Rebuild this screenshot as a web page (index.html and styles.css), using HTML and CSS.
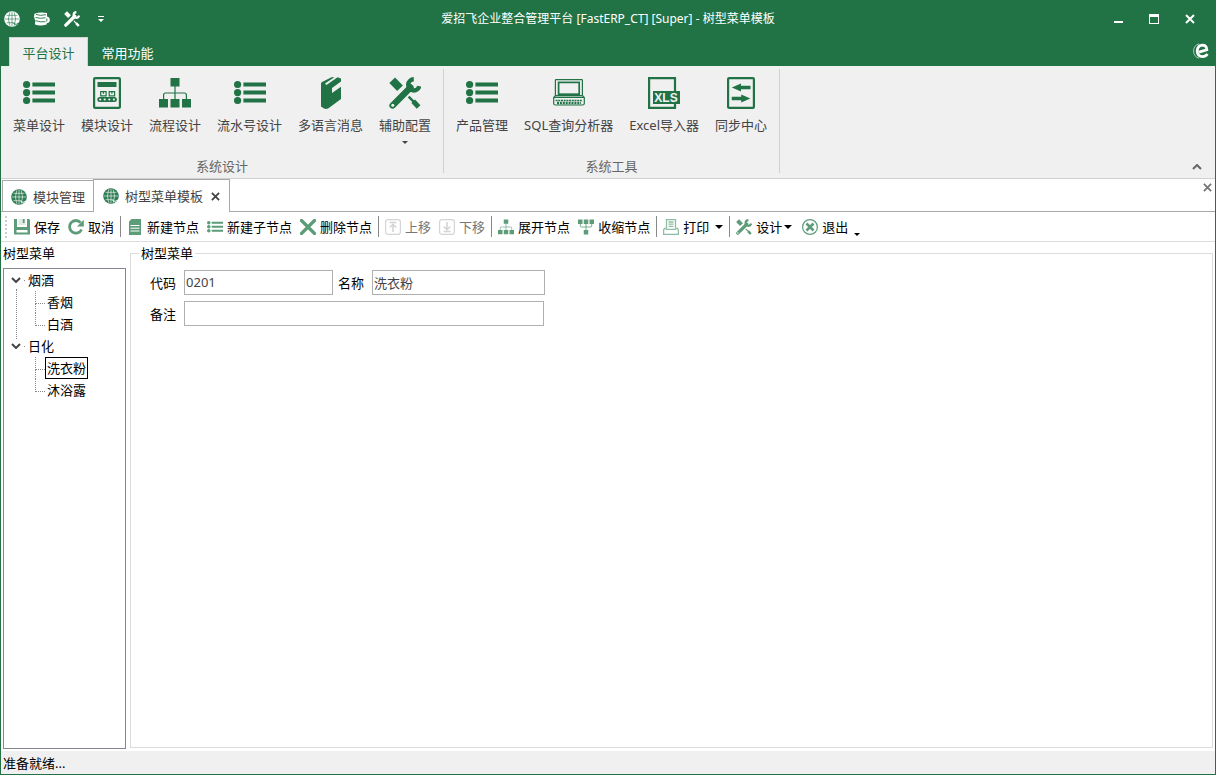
FILE: index.html
```html
<!DOCTYPE html>
<html lang="zh-CN">
<head>
<meta charset="utf-8">
<meta name="viewport" content="width=device-width, initial-scale=1">
<title>爱招飞企业整合管理平台</title>
<link rel="stylesheet" href="styles.css">
</head>
<body>
<svg class="sprite" aria-hidden="true">
  <symbol id="i-list" viewBox="0 0 32 32">
    <g fill="currentColor"><circle cx="3.6" cy="7.5" r="3.6"/><circle cx="3.6" cy="15.6" r="3.6"/><circle cx="3.6" cy="23.5" r="3.6"/>
    <path d="M9.4 5.5H32v4H9.4zM9.4 13.6H32v4H9.4zM9.4 21.5H32v4H9.4z"/></g>
  </symbol>
  <symbol id="i-module" viewBox="0 0 32 32">
    <rect x="3.1" y="1.1" width="25.8" height="29.8" rx="1" fill="none" stroke="currentColor" stroke-width="2.2"/>
    <path d="M6.5 5h19v5h-19z" fill="currentColor"/>
    <path d="M9.7 14.700h5.400v4.200H9.700zM18.200 14.700h5.400v4.200h-5.400zM12.400 14.700v2M20.900 14.700v2" fill="none" stroke="currentColor" stroke-width="1.200"/>
    <rect x="6.3" y="20" width="19.600" height="5" rx="2.500" fill="currentColor"/>
    <g fill="#f0f0f0"><circle cx="9.200" cy="22.500" r="1.100"/><circle cx="13.700" cy="22.500" r="1.100"/><circle cx="18.300" cy="22.500" r="1.100"/><circle cx="22.900" cy="22.500" r="1.100"/></g>
  </symbol>
  <symbol id="i-flow" viewBox="0 0 32 32">
    <path d="M11.5 1h9v8.6h-9zM0 22h9v8.6H0zM11.5 22h9v8.6h-9zM23 22h9v8.6h-9z" fill="currentColor"/>
    <path d="M16 9v14M4.600 22.500V18q0-2 2-2h18.800q2 0 2 2v4.500" fill="none" stroke="currentColor" stroke-width="1.200"/>
  </symbol>
  <symbol id="i-collapse" viewBox="0 0 32 32">
    <path d="M11.500 22h9v9h-9zM0 1h9v9H0zM11.500 1h9v9h-9zM23 1h9v9h-9z" fill="currentColor"/>
    <path d="M16 9v14M4.600 9v5q0 2 2 2h18.800q2 0 2-2V9" fill="none" stroke="currentColor" stroke-width="1.600"/>
  </symbol>
  <symbol id="i-book" viewBox="0 0 32 32">
    <path d="M6 6.500Q6 5.500 7 5L16 .5 18 0 19 .6 10 6.500 11.500 8 22.500.3 26 1.500V4.500L17 11V16L26 9.800V22L13.500 31.300Q11 32.500 9 31.500L6 29.500z" fill="currentColor"/>
  </symbol>
  <symbol id="i-tools" viewBox="0 0 32 32">
    <g fill="none" stroke="currentColor">
      <path d="M3.200 3.200 11 11.200" stroke-width="8"/>
      <path d="M3.600 28.400 21.500 10.500" stroke-width="6.400" stroke-linecap="round"/>
      <path d="M24.800 2.300a5.600 5.600 0 1 0 5.500 6.900" stroke-width="4.400"/>
      <path d="m19.600 19.600 6 6" stroke-width="2.400"/>
      <path d="m24.200 24.200 5.400 5.800" stroke-width="5"/>
    </g>
    <circle cx="3.800" cy="28.200" r="1.500" fill="#f4f4f4"/>
  </symbol>
  <symbol id="i-laptop" viewBox="0 0 32 32">
    <g fill="none" stroke="currentColor" stroke-width="1.200">
      <rect x="2.400" y="2.600" width="27" height="16" rx=".6"/>
      <rect x="5.600" y="5.400" width="20.600" height="11.800" stroke-width="1.700"/>
      <path d="M2.400 18.600.7 20.400V26.500q0 1.500 1.800 1.500h27q1.800 0 1.800-1.500v-6.100l-1.700-1.800M1 20.300h30"/>
      <path d="M2.600 23.500h27" stroke-width="1.600" stroke-dasharray="2 .7"/>
      <path d="M4 26h24" stroke-width="2.400" stroke-dasharray="2 .9"/>
    </g>
  </symbol>
  <symbol id="i-sync" viewBox="0 0 32 32">
    <rect x="3.100" y="1.100" width="25.800" height="29.800" rx="1" fill="none" stroke="currentColor" stroke-width="2.200"/>
    <path d="m6.800 10.500 9.200-4v2.300h9.500v3.500H16v2.300zM25.400 21.500l-9.200-4v2.300H6.700v3.500h9.500v2.300z" fill="currentColor"/>
  </symbol>
  <symbol id="i-globe" viewBox="0 0 16 16">
    <circle cx="8" cy="8" r="7.800" fill="currentColor"/>
    <path d="M8 1v14M1 8h14M2.500 4.300h11M2.500 11.700h8M5.800 1.300Q3 8 5.800 14.700M10.200 1.300Q13 8 10.200 14.700" fill="none" stroke="var(--grid)" stroke-width=".6"/>
    <path d="M9.500 12.500q2.500 2 5.600-.5" fill="none" stroke="var(--grid)" stroke-width="1"/>
  </symbol>
  <symbol id="i-coins" viewBox="0 0 16 16">
    <path d="M.5 2.800Q6 .6 13 2v3.500Q15 6 15.700 7.500v3q-1.200 1.700-3 1.700v1.300Q6 15.500 1 13.500V11l.8-.8L.8 8.500 0 5.500z" fill="currentColor"/>
    <path d="M2 3.500q4.500 1.600 10 .2M1.500 6.500q5 1.600 10 .2M2 9.700q5 1.800 9.500 1M12.800 7.500v3" fill="none" stroke="#217346" stroke-width=".9"/>
  </symbol>
  <symbol id="i-save" viewBox="0 0 16 16">
    <path d="M0 0h3v8h10V0h2l1 1v14.500H0z" fill="currentColor"/><path d="M4.500 0h7v6h-7z" fill="currentColor" opacity=".2"/><path d="M8.800 0h1.800v4H8.800z" fill="currentColor"/><path d="M2.500 11h11v2.500h-11z" fill="#fff"/>
  </symbol>
  <symbol id="i-redo" viewBox="0 0 16 16">
    <path d="M13.600 10.500A6.300 6.300 0 1 1 12.600 3.600" fill="none" stroke="currentColor" stroke-width="2.800"/><path d="M15.800.8v6.700H9z" fill="currentColor"/>
  </symbol>
  <symbol id="i-doc" viewBox="0 0 16 16">
    <path d="M4.500 0H14v16H2V2.500z" fill="currentColor"/><path d="M3.500 6.500h9M3.500 9.200h9M3.500 12h9" stroke="#fff" stroke-width="1"/>
  </symbol>
  <symbol id="i-del" viewBox="0 0 16 16"><path d="m1.500 1.500 13 13M14.500 1.500l-13 13" stroke="currentColor" stroke-width="3.200" stroke-linecap="round"/></symbol>
  <symbol id="i-up" viewBox="0 0 16 16"><rect x=".6" y=".6" width="14.800" height="14.800" rx="2.500" fill="none" stroke="currentColor" stroke-width="1.200"/><path d="M4.500 3.500h7M8 13V6M4.700 8.500 8 5.300l3.300 3.200" fill="none" stroke="currentColor" stroke-width="1.600"/></symbol>
  <symbol id="i-down" viewBox="0 0 16 16"><rect x=".6" y=".6" width="14.800" height="14.800" rx="2.500" fill="none" stroke="currentColor" stroke-width="1.200"/><path d="M4.500 12.500h7M8 3v7M4.700 7.500 8 10.700l3.300-3.200" fill="none" stroke="currentColor" stroke-width="1.600"/></symbol>
  <symbol id="i-print" viewBox="0 0 16 16"><path d="M3.500 9.500V.6h9v8.900M3 9.500H1.500L.6 11v4.400h14.800V11l-.9-1.500H13M5.500 3h5M5.500 5.200h5M5.500 7.400h5M3 10.300h10" fill="none" stroke="currentColor" stroke-width="1.300"/></symbol>
  <symbol id="i-exit" viewBox="0 0 16 16"><circle cx="8" cy="8" r="7.400" fill="none" stroke="currentColor" stroke-width="1.200"/><path d="m4.500 4.500 7 7M11.500 4.500l-7 7" stroke="currentColor" stroke-width="2.600"/></symbol>
  <symbol id="i-x" viewBox="0 0 10 10"><path d="m1 1 8 8M9 1 1 9" stroke="currentColor" stroke-width="2"/></symbol>
  <symbol id="i-caret" viewBox="0 0 8 4"><path d="M0 0h8L4 4z" fill="currentColor"/></symbol>
  <symbol id="i-chev" viewBox="0 0 10 6"><path d="m1 1 4 4 4-4" fill="none" stroke="currentColor" stroke-width="2"/></symbol>
</svg>

<div class="app">
  <header class="titlebar">
    <div class="quick">
      <button class="quick-btn" aria-label="系统"><svg class="ico16"><use href="#i-globe"/></svg></button>
      <button class="quick-btn" aria-label="数据"><svg class="ico16"><use href="#i-coins"/></svg></button>
      <button class="quick-btn" aria-label="设置"><svg class="ico16"><use href="#i-tools"/></svg></button>
      <button class="quick-btn" aria-label="自定义"><svg class="quick-more" viewBox="0 0 6 6"><path d="M0 0h6v1H0zM0 3h6L3 6z" fill="#fff"/></svg></button>
    </div>
    <h1 class="title">爱招飞企业整合管理平台 [FastERP_CT] [Super] - 树型菜单模板</h1>
    <div class="window-btns">
      <button class="win-btn" aria-label="最小化"><svg class="win-ico" viewBox="0 0 10 10"><path d="M1 7h9v2H1z" fill="#fff"/></svg></button>
      <button class="win-btn" aria-label="最大化"><svg class="win-ico" viewBox="0 0 10 10"><path d="M0 0h10v10H0zM1 3v6h8V3z" fill="#fff" fill-rule="evenodd"/></svg></button>
      <button class="win-btn" aria-label="关闭"><svg class="win-ico"><use href="#i-x"/></svg></button>
    </div>
  </header>

  <nav class="ribbon-tabs">
    <button class="ribbon-tab is-active">平台设计</button>
    <button class="ribbon-tab">常用功能</button>
    <svg class="brand" viewBox="0 0 16 16" aria-hidden="true"><path d="M6 9.200 13.800 6.800Q13.500 2.200 9.500 2.200 4.500 2.500 4.200 8q.3 5.600 5.300 5.700 3 0 5-2.700" fill="none" stroke="#fff" stroke-width="2.800"/><path d="M6 .8Q.6 2.500.6 8T6 15.200" fill="none" stroke="#a9cdb8" stroke-width="1"/></svg>
  </nav>

  <section class="ribbon">
    <div class="group">
      <div class="group-items">
        <button class="tool"><svg class="ico32"><use href="#i-list"/></svg><span>菜单设计</span></button>
        <button class="tool"><svg class="ico32"><use href="#i-module"/></svg><span>模块设计</span></button>
        <button class="tool"><svg class="ico32"><use href="#i-flow"/></svg><span>流程设计</span></button>
        <button class="tool"><svg class="ico32"><use href="#i-list"/></svg><span>流水号设计</span></button>
        <button class="tool"><svg class="ico32"><use href="#i-book"/></svg><span>多语言消息</span></button>
        <button class="tool"><svg class="ico32"><use href="#i-tools"/></svg><span>辅助配置</span><svg class="tool-caret"><use href="#i-caret"/></svg></button>
      </div>
      <div class="group-name">系统设计</div>
    </div>
    <div class="group">
      <div class="group-items">
        <button class="tool"><svg class="ico32"><use href="#i-list"/></svg><span>产品管理</span></button>
        <button class="tool"><svg class="ico32"><use href="#i-laptop"/></svg><span>SQL查询分析器</span></button>
        <button class="tool"><svg class="ico32" viewBox="0 0 32 32">
          <path d="M27 14V1.100H1.100v29.800H27V27" fill="none" stroke="currentColor" stroke-width="2.200"/>
          <path d="M5 14h27v13H5z" fill="currentColor"/>
          <text x="18" y="25" text-anchor="middle" fill="#f0f0f0" class="xls">XLS</text>
        </svg><span>Excel导入器</span></button>
        <button class="tool"><svg class="ico32"><use href="#i-sync"/></svg><span>同步中心</span></button>
      </div>
      <div class="group-name">系统工具</div>
    </div>
    <button class="ribbon-fold" aria-label="折叠功能区"><svg class="chev up"><use href="#i-chev"/></svg></button>
  </section>

  <nav class="doc-tabs">
    <button class="doc-tab"><svg class="ico16"><use href="#i-globe"/></svg><span>模块管理</span></button>
    <button class="doc-tab is-active"><svg class="ico16"><use href="#i-globe"/></svg><span>树型菜单模板</span><svg class="tab-x"><use href="#i-x"/></svg></button>
    <button class="doc-close" aria-label="关闭页面"><svg class="tab-x"><use href="#i-x"/></svg></button>
  </nav>

  <div class="toolbar" role="toolbar">
    <span class="grip"></span>
    <button class="cmd"><svg class="ico16"><use href="#i-save"/></svg>保存</button>
    <button class="cmd"><svg class="ico16"><use href="#i-redo"/></svg>取消</button>
    <span class="sep"></span>
    <button class="cmd"><svg class="ico16"><use href="#i-doc"/></svg>新建节点</button>
    <button class="cmd"><svg class="ico16"><use href="#i-list"/></svg>新建子节点</button>
    <button class="cmd"><svg class="ico16"><use href="#i-del"/></svg>删除节点</button>
    <span class="sep"></span>
    <button class="cmd" disabled><svg class="ico16"><use href="#i-up"/></svg>上移</button>
    <button class="cmd" disabled><svg class="ico16"><use href="#i-down"/></svg>下移</button>
    <span class="sep"></span>
    <button class="cmd"><svg class="ico16"><use href="#i-flow"/></svg>展开节点</button>
    <button class="cmd"><svg class="ico16"><use href="#i-collapse"/></svg>收缩节点</button>
    <span class="sep"></span>
    <button class="cmd cmd-split"><svg class="ico16 pale"><use href="#i-print"/></svg>打印<svg class="caret"><use href="#i-caret"/></svg></button>
    <span class="sep"></span>
    <button class="cmd cmd-menu"><svg class="ico16"><use href="#i-tools"/></svg><span>设计</span><svg class="caret"><use href="#i-caret"/></svg></button>
    <button class="cmd"><svg class="ico16"><use href="#i-exit"/></svg>退出</button>
    <button class="more" aria-label="更多"><svg class="tool-caret"><use href="#i-caret"/></svg></button>
  </div>

  <main class="main">
    <aside class="side">
      <h2 class="side-title">树型菜单</h2>
      <div class="tree">
        <ul class="roots">
          <li class="root">
            <div class="root-row"><button class="toggle" aria-label="收起"><svg class="chev"><use href="#i-chev"/></svg></button><span class="stub"></span><span>烟酒</span></div>
            <ul class="kids"><li class="kid"><span class="node">香烟</span></li><li class="kid"><span class="node">白酒</span></li></ul>
          </li>
          <li class="root">
            <div class="root-row"><button class="toggle" aria-label="收起"><svg class="chev"><use href="#i-chev"/></svg></button><span class="stub"></span><span>日化</span></div>
            <ul class="kids"><li class="kid"><span class="node is-selected">洗衣粉</span></li><li class="kid"><span class="node">沐浴露</span></li></ul>
          </li>
        </ul>
      </div>
    </aside>
    <fieldset class="panel">
      <legend>树型菜单</legend>
      <div class="form-row">
        <label for="code">代码</label><input class="field code" id="code" type="text" value="0201">
        <label for="name">名称</label><input class="field name" id="name" type="text" value="洗衣粉">
      </div>
      <div class="form-row">
        <label for="note">备注</label><input class="field note" id="note" type="text">
      </div>
    </fieldset>
  </main>

  <footer class="status">准备就绪...</footer>
</div>
</body>
</html>
```
FILE: styles.css
```css
:root {
  --green: #217346;
  --soft-green: #5c9c78;
  --bar: #f0f0f0;
  --line: #a8a8a8;
  --grid: #fff;
}

* { box-sizing: border-box; }

body {
  margin: 0;
  background: #fff;
  color: #000;
  font: 13px/20px "Noto Sans", "Noto Sans CJK SC", sans-serif;
}

button {
  margin: 0;
  padding: 0;
  border: 0;
  background: none;
  color: inherit;
  font: inherit;
  white-space: nowrap;
}

svg { display: block; flex: none; }
ul { margin: 0; padding: 0; list-style: none; }

.sprite { display: none; }
.ico16 { width: 16px; height: 16px; }
.ico32 { width: 32px; height: 32px; color: var(--green); }
.xls { font: bold 12px "Liberation Sans", sans-serif; }

.app {
  display: flex;
  flex-direction: column;
  min-height: 100vh;
  border: 1px solid var(--green);
  border-top: 0;
}

/* Title bar */
.titlebar {
  display: grid;
  grid-template-columns: 1fr auto 1fr;
  align-items: center;
  height: 37px;
  background: var(--green);
  color: #fff;
  --grid: var(--green);
}
.quick { display: flex; align-items: center; gap: 14px; padding-left: 3px; }
.quick-more { width: 6px; height: 6px; margin-left: 4px; }
.title { margin: 0; font-size: 12px; font-weight: 400; line-height: 20px; }
.window-btns { display: flex; justify-content: flex-end; padding-right: 7px; }
.win-btn { display: flex; justify-content: center; align-items: center; width: 36px; height: 35px; }
.win-ico { width: 10px; height: 10px; }

/* Ribbon */
.ribbon-tabs {
  display: flex;
  height: 29px;
  padding-left: 8px;
  background: var(--green);
  color: #fff;
}
.ribbon-tab { width: 79px; padding-top: 2px; }
.ribbon-tab.is-active { background: var(--bar); color: var(--green); border: 1px solid #d4d4d4; border-bottom: 0; }
.brand { width: 16px; height: 16px; margin: 6px 6px 0 auto; }

.ribbon {
  display: flex;
  min-height: 113px;
  background: var(--bar);
  border-bottom: 1px solid #d0d0d0;
  color: #444;
}
.group {
  display: flex;
  flex-direction: column;
  margin: 3px 0 5px;
  padding: 8px 4px 0;
  border-right: 1px solid #d0d0d0;
}
.group-items { display: flex; flex: 1; }
.tool { display: flex; flex-direction: column; align-items: center; gap: 6px; padding: 0 8px; }
.tool-caret { width: 6px; height: 3px; }
.group-name { color: #666; text-align: center; line-height: 14px; }
.ribbon-fold { align-self: flex-end; margin: 0 13px 8px auto; color: #666; }
.chev { width: 10px; height: 6px; }
.chev.up { transform: rotate(180deg); }

/* Document tabs */
.doc-tabs {
  display: flex;
  align-items: flex-end;
  height: 33px;
  padding-left: 1px;
  border-bottom: 1px solid var(--line);
  color: #444;
}
.doc-tab {
  display: flex;
  align-items: center;
  gap: 6px;
  height: 31px;
  padding: 1px 8px 0;
  border: 1px solid var(--line);
  border-bottom: 0;
}
.doc-tab .ico16 { color: #2f7d53; }
.doc-tab.is-active {
  height: 33px;
  margin: 0 0 -1px -1px;
  padding: 0 9px;
  background: #fff;
}
.tab-x { width: 9px; height: 9px; margin-left: 2px; }
.doc-close { align-self: flex-start; margin: 4px 3px 0 auto; color: #777; }

/* Toolbar */
.toolbar {
  display: flex;
  align-items: center;
  height: 30px;
  border-bottom: 1px solid #dcdcdc;
}
.grip { height: 22px; margin: 0 3px 0 4px; border-left: 2px dotted #ccc; }
.cmd { display: flex; align-items: center; gap: 4px; padding: 0 4px; }
.cmd .ico16 { color: var(--soft-green); }
.cmd .pale { color: #8fbda4; }
.cmd:disabled { color: #777; }
.cmd:disabled .ico16 { color: #d4d4d4; }
.sep { width: 1px; height: 21px; margin: 0 2px; background: #888; }
.caret { width: 8px; height: 4px; }
.cmd-split .caret { margin-left: 2px; }
.cmd-menu .caret { margin-left: -2px; }
.cmd-menu { padding-right: 6px; }
.more { align-self: flex-end; padding: 0 2px 5px; }

/* Work area */
.main { display: flex; flex: 1; gap: 4px; padding: 1px 2px 1px; }
.side { display: flex; flex-direction: column; width: 123px; flex: none; }
.side-title { margin: 0 0 5px; font-size: 13px; font-weight: 400; line-height: 20px; }
.tree { flex: 1; margin-bottom: 1px; border: 1px solid #828790; }
.root { position: relative; }
.root:not(:last-child)::before {
  content: "";
  position: absolute;
  top: 20px;
  bottom: -4px;
  left: 12px;
  border-left: 1px dotted #888;
}
.root-row { display: flex; align-items: center; height: 22px; padding-left: 7px; }
.toggle { color: #444; }
.stub { width: 1px; height: 1px; margin: 0 3px; background: #888; }
.kids { padding-left: 31px; }
.kid { position: relative; display: flex; align-items: center; height: 22px; padding-left: 10px; }
.kid::before {
  content: "";
  position: absolute;
  top: 0;
  left: 0;
  width: 9px;
  height: 12px;
  border: 1px dotted #888;
  border-width: 0 0 1px 1px;
}
.kid:not(:last-child)::after {
  content: "";
  position: absolute;
  top: 12px;
  bottom: 0;
  left: 0;
  border-left: 1px dotted #888;
}
.node { padding: 0 1px; border: 1px solid transparent; line-height: 20px; }
.node.is-selected { border-color: #000; }

.panel {
  flex: 1;
  min-width: 0;
  margin: 0 0 2px;
  padding: 7px 19px;
  border: 1px solid #dcdcdc;
}
.panel legend { margin-left: -11px; padding: 0 2px; line-height: 20px; }
.form-row { display: flex; align-items: center; margin-bottom: 6px; }
.form-row label { margin-right: 8px; }
.field {
  height: 25px;
  padding: 0 1px 1px;
  border: 1px solid #b0b0b0;
  background: #fff;
  color: #444;
  font: inherit;
}
.code { width: 149px; margin-right: 5px; }
.name { width: 173px; }
.note { width: 360px; }

.status { height: 23px; padding: 2px; background: var(--bar); line-height: 20px; }
```
